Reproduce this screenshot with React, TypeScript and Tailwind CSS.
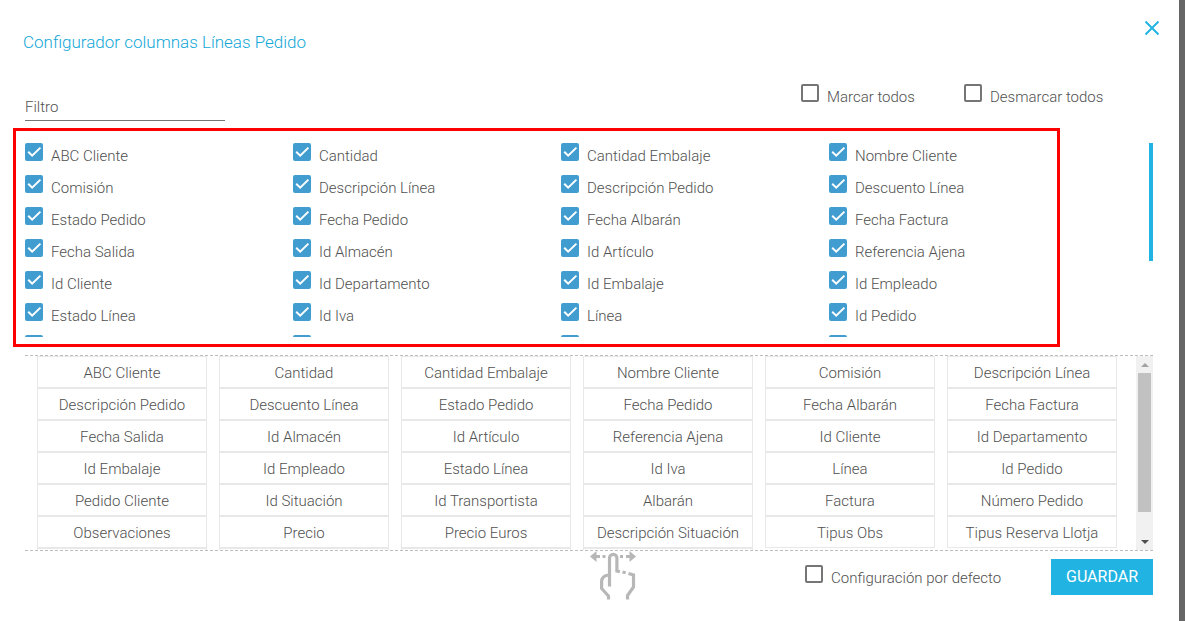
import { useState } from "react";
import type { ReactNode } from "react";

const columns = [
  "ABC Cliente", "Cantidad", "Cantidad Embalaje", "Nombre Cliente",
  "Comisión", "Descripción Línea", "Descripción Pedido", "Descuento Línea",
  "Estado Pedido", "Fecha Pedido", "Fecha Albarán", "Fecha Factura",
  "Fecha Salida", "Id Almacén", "Id Artículo", "Referencia Ajena",
  "Id Cliente", "Id Departamento", "Id Embalaje", "Id Empleado",
  "Estado Línea", "Id Iva", "Línea", "Id Pedido",
  "Pedido Cliente", "Id Situación", "Id Transportista", "Albarán",
];

const order = [
  ...columns, "Factura", "Número Pedido",
  "Observaciones", "Precio", "Precio Euros", "Descripción Situación", "Tipus Obs", "Tipus Reserva Llotja",
  "", "", "", "",
];

function Check({ children, checked = false }: { children: ReactNode; checked?: boolean }) {
  const [on, setOn] = useState(checked);
  return (
    <label className="flex items-start gap-2 whitespace-nowrap">
      <span className="grid size-[18px] shrink-0">
        <input
          type="checkbox"
          checked={on}
          onChange={() => setOn(!on)}
          className="col-start-1 row-start-1 size-[18px] appearance-none rounded-xs border-2 border-[#757575] checked:border-[#419dd0] checked:bg-[#419dd0]"
        />
        {on && (
          <svg viewBox="0 0 18 18" className="pointer-events-none col-start-1 row-start-1 size-[18px]" aria-hidden="true">
            <path d="M3.2 8.7 7.2 12.7 15.4 4.6" fill="none" stroke="#fff" strokeWidth="2" />
          </svg>
        )}
      </span>
      <span className="leading-[26px]">{children}</span>
    </label>
  );
}

function DragHand() {
  return (
    <svg viewBox="0 0 48 50" className="h-[50px] w-12" fill="none" stroke="#b7b7b7" strokeWidth="3" aria-hidden="true">
      <path d="M1 5.5 7.500 0v4H11v3H7.500v4ZM47 5.500 40.500 0v4H37v3h3.500v4Z" fill="#b7b7b7" stroke="none" />
      <path d="M13.500 5.500h3M31 5.500h3" />
      <path d="M20.500 35.500V7a3.700 3.700 0 0 1 7.400 0V20l3 .8" strokeWidth="3.200" />
      <path d="M33.500 21l3.200 .8" />
      <path d="M39.500 22.500l5 1.500V36L38.500 44.500v4M20 24c-5 .3-7.400 2.800-7.400 7V37.500L19.500 45v3.500" strokeWidth="3.200" />
    </svg>
  );
}

export default function App() {
  return (
    <div className="flex min-h-screen bg-white font-[Roboto,sans-serif] text-[15px] font-light text-[#505050]">
      <main className="min-w-0 flex-1">
        <header className="flex items-start justify-between pt-4 pr-[15px] pl-[23px]">
          <h1 className="mt-[14px] text-[17px] leading-6 text-[#12a8d8]">Configurador columnas Líneas Pedido</h1>
          <button type="button" aria-label="Cerrar" className="size-6 text-[#21b4e2]">
            <svg viewBox="0 0 24 24" className="size-6" fill="none" stroke="currentColor" strokeWidth="2">
              <path d="m5.500 5.500 13 13m0-13-13 13" />
            </svg>
          </button>
        </header>

        <div className="pr-[26px] pl-[25px]">
          <div className="mt-[30px] flex h-[37px] items-start justify-between">
            <input
              type="text"
              placeholder="Filtro"
              aria-label="Filtro"
              className="w-[200px] self-end border-b border-[#757575] leading-[26px] outline-none placeholder:text-[#505050]"
            />
            <div className="grid grid-cols-[163px_189px]">
              <Check>Marcar todos</Check>
              <Check>Desmarcar todos</Check>
            </div>
          </div>

          <section className="relative mt-[22px] flex justify-between">
            <div className="grid h-[194px] flex-1 auto-rows-[32px] grid-cols-4 overflow-hidden pr-[52px]">
              {columns.map((name) => (
                <Check key={name} checked>{name}</Check>
              ))}
            </div>
            <div className="h-[118px] w-1 bg-[#21b4e2]" />
            <div className="pointer-events-none absolute -top-[15px] right-[93px] -bottom-[10px] -left-3 border-3 border-[#ff0000]" />
          </section>

          <section className="mt-[18px] flex h-[196px] overflow-hidden border-y border-dashed border-[#bdbdbd]">
            <ul className="grid flex-1 auto-rows-[32px] grid-cols-6 gap-x-3 pr-[19px] pl-3 text-center">
              {order.map((name, i) => (
                <li key={i} className="border border-[#e8e8e8] leading-8 whitespace-nowrap">{name}</li>
              ))}
            </ul>
            <div className="flex w-[17px] flex-col items-center justify-between bg-[#f1f1f1]">
              <div className="flex h-[17px] items-center">
                <svg viewBox="0 0 8 4" className="h-1 w-2" aria-hidden="true"><path d="m4 0 4 4H0Z" fill="#a3a3a3" /></svg>
              </div>
              <div className="mb-[21px] w-[13px] flex-1 bg-[#c1c1c1]" />
              <div className="flex h-[17px] items-center">
                <svg viewBox="0 0 8 4" className="h-1 w-2" aria-hidden="true"><path d="M0 0h8L4 4Z" fill="#505050" /></svg>
              </div>
            </div>
          </section>

          <footer className="flex items-start justify-between pl-[50%]">
            <DragHand />
            <div className="mt-2 flex items-start">
              <div className="mt-[6px] w-[246px]">
                <Check>Configuración por defecto</Check>
              </div>
              <button type="button" className="h-9 w-[102px] bg-[#21b4e2] text-[16px] font-normal text-white">GUARDAR</button>
            </div>
          </footer>
        </div>
      </main>
      <div className="w-[6px] bg-[#666666]" />
    </div>
  );
}
